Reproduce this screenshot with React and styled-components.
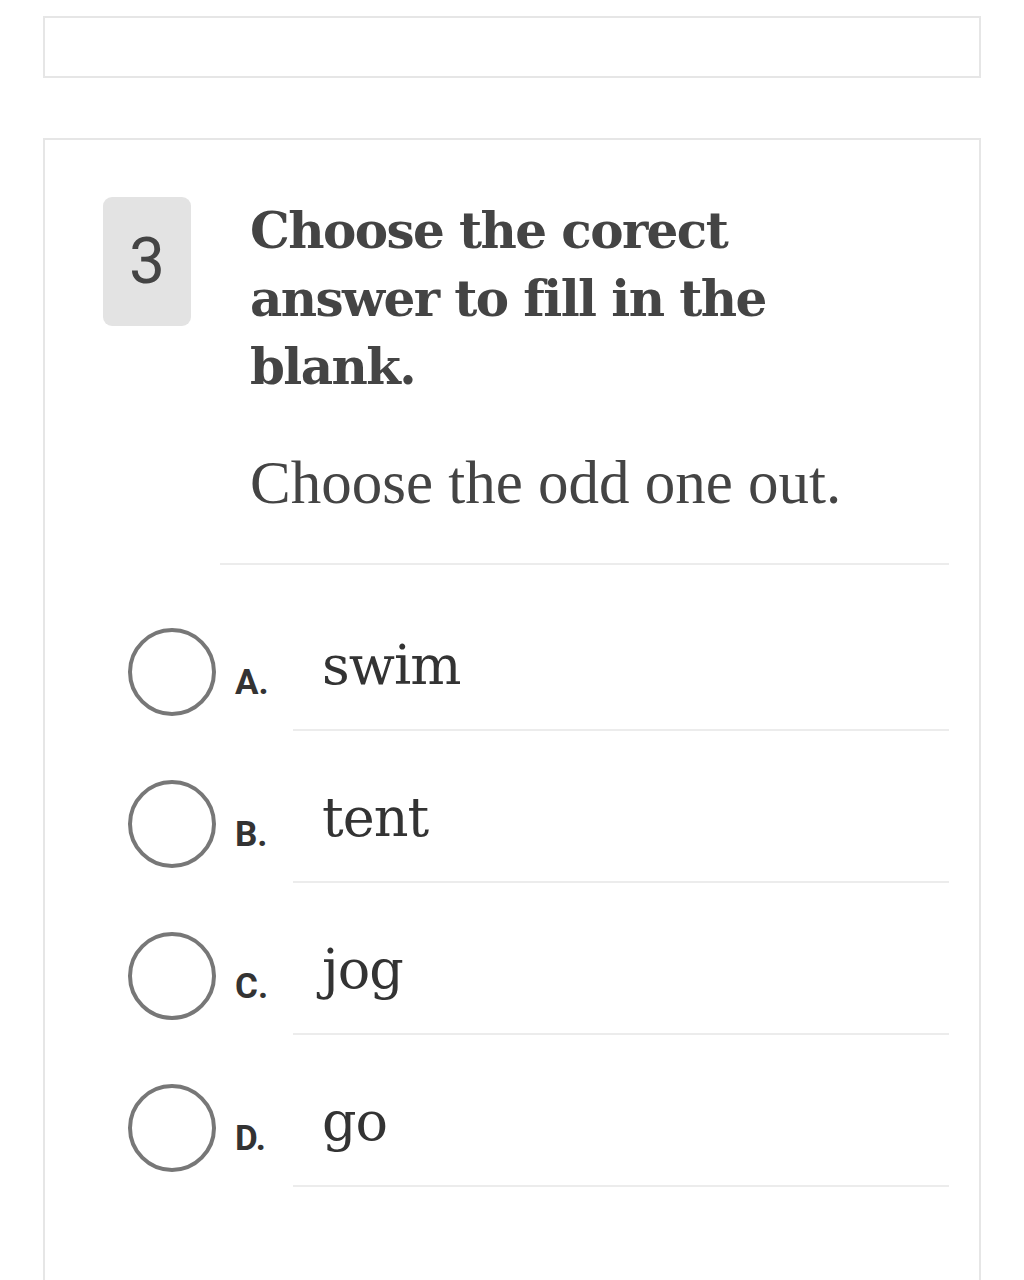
import React from 'react';
import styled, { createGlobalStyle } from 'styled-components';

const GlobalStyle = createGlobalStyle`
  html, body {
    margin: 0;
    padding: 0;
    background: #ffffff;
  }
`;

const Page = styled.div`
  padding: 16px 43px 0;
  box-sizing: border-box;
  height: 1280px;
  overflow: hidden;
  display: flex;
  flex-direction: column;
`;

const TopBox = styled.div`
  height: 62px;
  box-sizing: border-box;
  border: 2px solid #e6e6e6;
`;

const Card = styled.div`
  margin-top: 60px;
  flex: 1;
  border: 2px solid #e6e6e6;
  border-bottom: none;
  padding: 57px 30px 0 58px;
`;

const Header = styled.div`
  display: flex;
  align-items: flex-start;
  gap: 59px;
`;

const Badge = styled.div`
  flex: none;
  width: 88px;
  height: 129px;
  border-radius: 9px;
  background: #e3e3e3;
  display: flex;
  align-items: center;
  justify-content: center;
  font-family: Roboto, "Liberation Sans", sans-serif;
  font-size: 64px;
  color: #444;
`;

const Heading = styled.h2`
  margin: 0;
  font-family: "DejaVu Serif", serif;
  font-weight: 700;
  font-size: 50px;
  letter-spacing: -1.6px;
  line-height: 68px;
  color: #444;
  max-width: 560px;
`;

const Prompt = styled.p`
  margin: 50px 0 0 147px;
  font-family: "Liberation Serif", serif;
  font-size: 61px;
  line-height: 64px;
  color: #444;
`;

const Divider = styled.hr`
  margin: 48px 0 0 117px;
  border: none;
  border-top: 2px solid #ececec;
`;

const OptionList = styled.ul`
  list-style: none;
  margin: 48px 0 0 25px;
  padding: 0;
  display: flex;
  flex-direction: column;
  gap: 34px;
`;

const Option = styled.li`
  display: flex;
  align-items: center;
`;

const Radio = styled.span`
  flex: none;
  width: 88px;
  height: 88px;
  box-sizing: border-box;
  border: 4.5px solid #777;
  border-radius: 50%;
`;

const Letter = styled.span`
  flex: none;
  width: 58px;
  margin-left: 19px;
  padding-top: 20px;
  font-family: Roboto, "Open Sans", sans-serif;
  font-weight: 700;
  font-size: 35px;
  color: #333;
`;

const Answer = styled.span`
  flex: 1;
  height: 118px;
  box-sizing: border-box;
  display: flex;
  align-items: center;
  padding: 0 0 12px 29px;
  border-bottom: 2px solid #ececec;
  font-family: "DejaVu Serif", serif;
  font-size: 54px;
  letter-spacing: -1px;
  color: #333;
`;

const options = [
  { key: 'A', text: 'swim' },
  { key: 'B', text: 'tent' },
  { key: 'C', text: 'jog' },
  { key: 'D', text: 'go' },
];

export default function App() {
  return (
    <>
      <GlobalStyle />
      <Page>
        <TopBox />
        <Card>
          <Header>
            <Badge>3</Badge>
            <Heading>Choose the corect answer to fill in the blank.</Heading>
          </Header>
          <Prompt>Choose the odd one out.</Prompt>
          <Divider />
          <OptionList>
            {options.map((o) => (
              <Option key={o.key}>
                <Radio />
                <Letter>{o.key}.</Letter>
                <Answer>{o.text}</Answer>
              </Option>
            ))}
          </OptionList>
        </Card>
      </Page>
    </>
  );
}
